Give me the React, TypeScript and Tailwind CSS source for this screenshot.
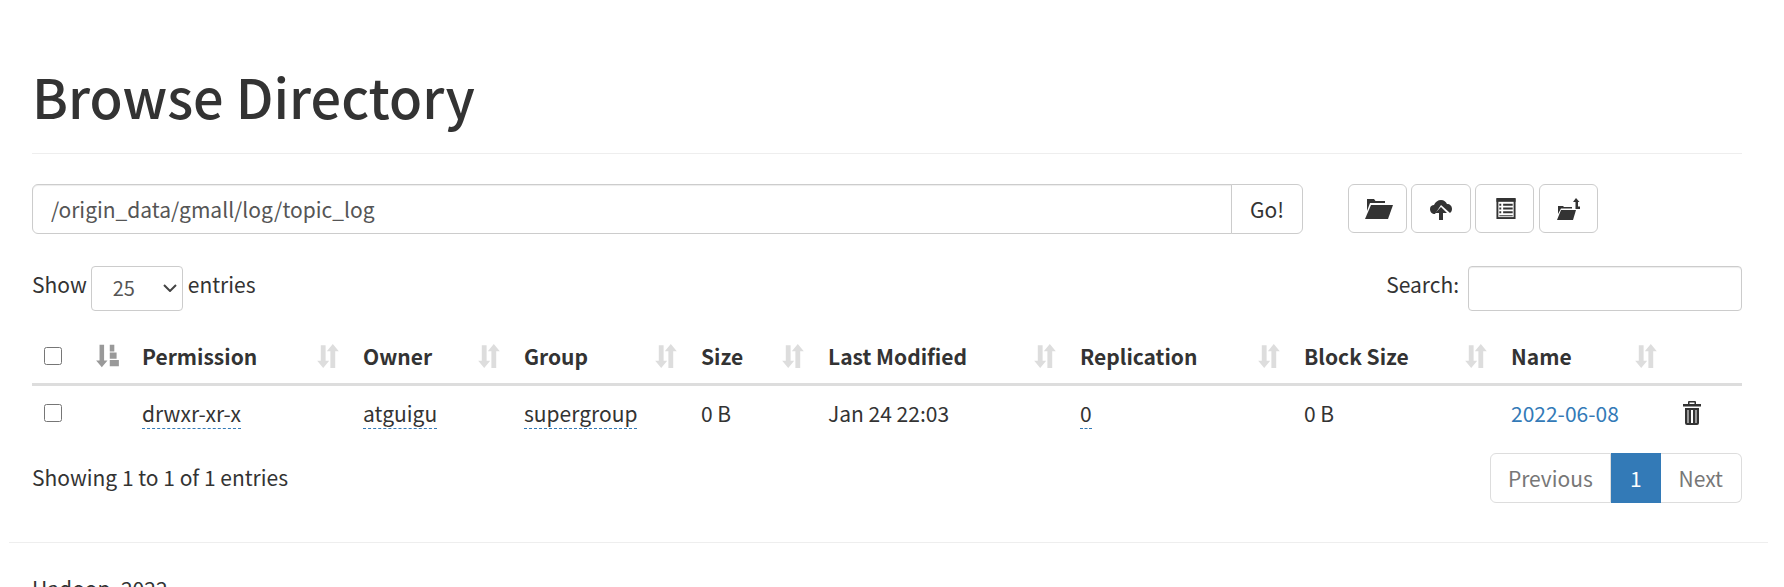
import React from 'react';

const SortIcon = ({ className = 'text-[#ddd]' }: { className?: string }) => (
  <svg viewBox="0 0 20 20" className={`w-[24px] h-[24px] shrink-0 ${className}`} fill="currentColor">
    <path d="M4 1h4v13h3l-5 6-5-6h3z" />
    <path d="M14 0l5 6h-3v14h-4V6H9z" />
  </svg>
);

const SortActive = () => (
  <svg viewBox="0 0 22 20" className="w-[25px] h-[24px] shrink-0 text-[#999]" fill="currentColor">
    <path d="M4 0h4v14h3l-5 6-5-6h3z" />
    <path d="M13 0h4v6h-4zM13 7h6v5.500h-6zM13 13.500h8V19h-8z" />
  </svg>
);

const columns = [
  { label: 'Permission', width: 'w-[221px]' },
  { label: 'Owner', width: 'w-[161px]' },
  { label: 'Group', width: 'w-[177px]' },
  { label: 'Size', width: 'w-[127px]' },
  { label: 'Last Modified', width: 'w-[252px]' },
  { label: 'Replication', width: 'w-[224px]' },
  { label: 'Block Size', width: 'w-[207px]' },
  { label: 'Name', width: 'w-[170px]' },
];

const App: React.FC = () => {
  return (
    <div className="h-[587px] overflow-hidden bg-white text-[#333] text-[21px] leading-[30px] font-['Noto_Sans_CJK_SC','Liberation_Sans',sans-serif]">
      <div className="pl-[32px] pr-[42px]">
        <header className="pt-[60px] pb-[21px] border-b border-[#eee]">
          <h1 className="text-[54px] leading-[72px] font-medium">Browse Directory</h1>
        </header>

        <div className="flex mt-[30px]">
          <div className="flex w-[1271px]">
            <input
              readOnly
              value="/origin_data/gmall/log/topic_log"
              className="flex-1 h-[50px] px-[18px] text-[21px] text-[#555] border border-[#ccc] rounded-l-[6px] shadow-[inset_0_1px_1px_rgba(0,0,0,0.075)] outline-none"
            />
            <button className="w-[72px] h-[50px] -ml-px border border-[#ccc] rounded-r-[6px] bg-white">Go!</button>
          </div>
          <div className="flex gap-[4px] ml-[45px]">
            <button className="w-[59px] h-[49px] pl-[3px] border border-[#ccc] rounded-[6px] bg-white flex items-center justify-center">
              <svg viewBox="0 0 28 20" className="w-[28px] h-[20px]" fill="currentColor">
                <path d="M2 0h7l1.500 2H20v2H5L2 12z" />
                <path d="M6 6h22l-5 14H0z" />
              </svg>
            </button>
            <button className="w-[60px] h-[49px] border border-[#ccc] rounded-[6px] bg-white flex items-center justify-center">
              <svg viewBox="0 0 24 24" className="w-[24px] h-[24px]" fill="currentColor">
                <path d="M6 17c-3 0-5-2-5-5s2-4 4-4c1-3 4-5 7-5s5 2 6 4c3 0 5 2 5 5 0 2-1 3-2 4l-9-8z" />
                <path d="M12 10l6 6h-4v7h-4v-7H6z" />
              </svg>
            </button>
            <button className="w-[59px] h-[49px] pl-[2px] border border-[#ccc] rounded-[6px] bg-white flex items-center justify-center">
              <svg viewBox="0 0 20 22" className="w-[20px] h-[21px]">
                <rect x="1" y="1.500" width="18" height="19.500" fill="#fff" stroke="#333" strokeWidth="2" />
                <rect x="0" y="0" width="20" height="4" fill="#333" />
                <path d="M3 6h2v2H3zM3 10h2v2H3zM3 14h2v2H3zM7 6h10v2H7zM7 10h10v2H7zM7 14h10v2H7zM3 18h14v1H3z" fill="#333" />
              </svg>
            </button>
            <button className="w-[59px] h-[49px] ml-[1px] border border-[#ccc] rounded-[6px] bg-white flex items-center justify-center">
              <svg viewBox="0 0 24 22" className="w-[24px] h-[22px]" fill="currentColor">
                <path d="M1 8h5l1 1h8v1.500H4L1 16z" />
                <path d="M4 12h15l-3 10H0z" />
                <path d="M19 0l3.500 4H21v4.500h2V11h-4.500V4H16z" />
              </svg>
            </button>
          </div>
        </div>

        <div className="flex items-center justify-between mt-[32px] h-[45px]">
          <label className="flex items-center gap-[4px]">
            <span className="pb-[9px]">Show</span>
            <span className="relative">
              <select className="block appearance-none w-[92px] h-[45px] pl-[21px] pb-[2px] text-[20px] text-[#555] border border-[#ccc] rounded-[4px] bg-white">
                <option>25</option>
              </select>
              <svg viewBox="0 0 14 8" className="absolute right-[6px] top-[18px] w-[14px] h-[8px] pointer-events-none" fill="none" stroke="#444" strokeWidth="2">
                <path d="M1 1l6 6 6-6" />
              </svg>
            </span>
            <span className="pb-[9px] ml-[1px]">entries</span>
          </label>
          <label className="flex items-center gap-[9px]">
            <span className="pb-[9px]">Search:</span>
            <input className="w-[274px] h-[45px] border border-[#ccc] rounded-[4px] shadow-[inset_0_1px_1px_rgba(0,0,0,0.075)]" />
          </label>
        </div>

        <table className="w-full table-fixed border-collapse mt-[18px]">
          <thead>
            <tr className="border-b-[3px] border-[#ddd] h-[55px]">
              <th className="w-[50px] px-[8px] font-normal text-left">
                <input type="checkbox" className="block w-[18px] h-[18px] ml-[4px]" />
              </th>
              <th className="w-[52px] pl-[13px] text-left">
                <SortActive />
              </th>
              {columns.map((col) => (
                <th key={col.label} className={`${col.width} px-[8px] text-left font-bold`}>
                  <div className="flex items-center justify-between pr-[7px]">
                    <span>{col.label}</span>
                    <SortIcon />
                  </div>
                </th>
              ))}
              <th />
            </tr>
          </thead>
          <tbody>
            <tr className="h-[56px]">
              <td className="px-[8px]">
                <input type="checkbox" className="block w-[18px] h-[18px] ml-[4px]" />
              </td>
              <td />
              <td className="px-[8px]">
                <span className="border-b border-dashed border-[#337ab7]">drwxr-xr-x</span>
              </td>
              <td className="px-[8px]">
                <span className="border-b border-dashed border-[#337ab7]">atguigu</span>
              </td>
              <td className="px-[8px]">
                <span className="border-b border-dashed border-[#337ab7]">supergroup</span>
              </td>
              <td className="px-[8px]">0 B</td>
              <td className="px-[8px]">Jan 24 22:03</td>
              <td className="px-[8px]">
                <span className="border-b border-dashed border-[#337ab7]">0</span>
              </td>
              <td className="px-[8px]">0 B</td>
              <td className="px-[8px]">
                <a className="text-[#337ab7]">2022-06-08</a>
              </td>
              <td className="px-[8px]">
                <svg viewBox="0 0 20 24" className="w-[20px] h-[24px] ml-[1px]" fill="#333">
                  <path d="M7 0h6a1 1 0 0 1 1 1v2h5v2.500H1V3h5V1a1 1 0 0 1 1-1zm.500 1.500V3h5V1.500z" />
                  <path d="M3 7h14v15a2 2 0 0 1-2 2H5a2 2 0 0 1-2-2zm2.500 2v13h1V9zm3.500 0v13h2V9zm4.500 0v13h1V9z" fillRule="evenodd" />
                </svg>
              </td>
            </tr>
          </tbody>
        </table>

        <div className="flex items-center justify-between mt-[13px]">
          <div className="pb-[2px]">Showing 1 to 1 of 1 entries</div>
          <div className="flex h-[50px] items-stretch">
            <span className="px-[17px] flex items-center text-[#777] border border-[#ddd] rounded-l-[6px]">Previous</span>
            <span className="px-[18px] flex items-center text-white bg-[#337ab7] border border-[#337ab7]">1</span>
            <span className="px-[18px] flex items-center text-[#777] border border-[#ddd] border-l-0 rounded-r-[6px]">Next</span>
          </div>
        </div>
      </div>

      <div className="ml-[9px] mr-[16px] mt-[39px] border-t border-[#eee] pt-[30px] pl-[23px]">
        Hadoop, 2022.
      </div>
    </div>
  );
};

export default App;
